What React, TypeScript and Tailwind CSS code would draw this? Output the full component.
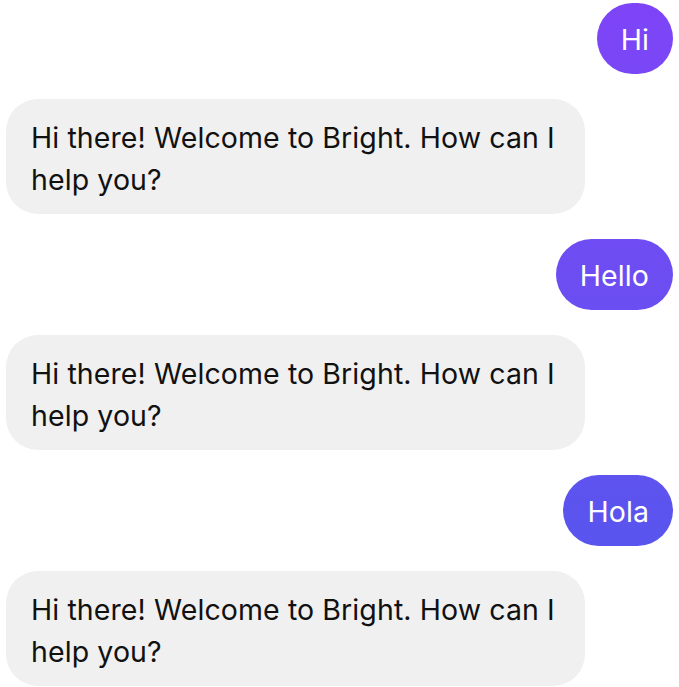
import React from 'react';

type Message = {
  from: 'me' | 'bot';
  text: string;
};

const messages: Message[] = [
  { from: 'me', text: 'Hi' },
  { from: 'bot', text: 'Hi there! Welcome to Bright. How can I help you?' },
  { from: 'me', text: 'Hello' },
  { from: 'bot', text: 'Hi there! Welcome to Bright. How can I help you?' },
  { from: 'me', text: 'Hola' },
  { from: 'bot', text: 'Hi there! Welcome to Bright. How can I help you?' },
];

const Bubble: React.FC<{ message: Message }> = ({ message }) => {
  if (message.from === 'me') {
    return (
      <div className="flex justify-end">
        <div className="h-[71px] px-[24px] pt-[3px] flex items-center rounded-full text-white bg-fixed bg-linear-to-b from-[#7e44f7] to-[#4d58ec]">
          {message.text}
        </div>
      </div>
    );
  }

  return (
    <div className="flex justify-start">
      <div className="w-[579px] pt-[18px] pb-[13px] px-[25px] rounded-[32px] bg-[#f0f0f0] text-[#111111]">
        {message.text}
      </div>
    </div>
  );
};

const App: React.FC = () => {
  return (
    <div
      className="min-h-screen bg-white px-[6px] pt-[3px] flex flex-col gap-[25px] text-[28.5px] leading-[42px] tracking-[0.1px]"
      style={{ fontFamily: 'Inter, "Noto Sans", sans-serif' }}
    >
      {messages.map((m, i) => (
        <Bubble key={i} message={m} />
      ))}
    </div>
  );
};

export default App;
